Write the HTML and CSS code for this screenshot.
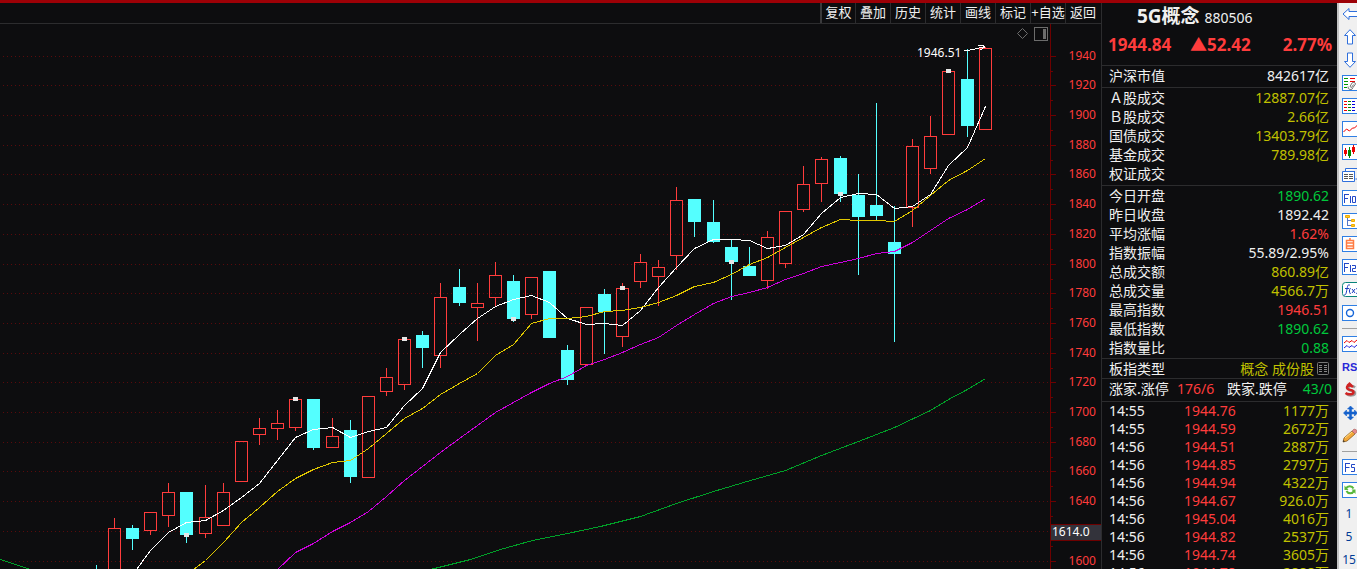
FILE: index.html
```html
<!DOCTYPE html>
<html lang="zh-CN">
<head>
<meta charset="utf-8">
<title>5G概念 880506</title>
<link rel="stylesheet" href="styles.css">
</head>
<body>
<div class="app">
  <main class="main">
    <nav class="toolbar">
      <button class="tool">复权</button><button class="tool">叠加</button><button class="tool">历史</button><button class="tool">统计</button><button class="tool">画线</button><button class="tool">标记</button><button class="tool">+自选</button><button class="tool">返回</button>
    </nav>
    <svg class="chart" id="chart" viewBox="0 24 1101 545" preserveAspectRatio="xMaxYMin slice" role="img" aria-label="K线图"></svg>
  </main>

  <aside class="quote">
    <header class="head">
      <h1 class="title">5G概念 <span class="code">880506</span></h1>
      <div class="prices"><span>1944.84</span><span>▲52.42</span><span>2.77%</span></div>
    </header>
    <dl class="group market">
      <div class="row"><dt>沪深市值</dt><dd>842617亿</dd></div>
    </dl>
    <dl class="group turnover">
      <div class="row"><dt>Ａ股成交</dt><dd class="yellow">12887.07亿</dd></div>
      <div class="row"><dt>Ｂ股成交</dt><dd class="yellow">2.66亿</dd></div>
      <div class="row"><dt>国债成交</dt><dd class="yellow">13403.79亿</dd></div>
      <div class="row"><dt>基金成交</dt><dd class="yellow">789.98亿</dd></div>
      <div class="row"><dt>权证成交</dt><dd></dd></div>
    </dl>
    <dl class="group stats">
      <div class="row"><dt>今日开盘</dt><dd class="green">1890.62</dd></div>
      <div class="row"><dt>昨日收盘</dt><dd>1892.42</dd></div>
      <div class="row"><dt>平均涨幅</dt><dd class="red">1.62%</dd></div>
      <div class="row"><dt>指数振幅</dt><dd>55.89/2.95%</dd></div>
      <div class="row"><dt>总成交额</dt><dd class="yellow">860.89亿</dd></div>
      <div class="row"><dt>总成交量</dt><dd class="yellow">4566.7万</dd></div>
      <div class="row"><dt>最高指数</dt><dd class="red">1946.51</dd></div>
      <div class="row"><dt>最低指数</dt><dd class="green">1890.62</dd></div>
      <div class="row"><dt>指数量比</dt><dd class="green">0.88</dd></div>
    </dl>
    <dl class="group">
      <div class="row"><dt>板指类型</dt><dd class="kind yellow">概念 成份股<svg class="list-icon" width="12" height="13" viewBox="0 0 12 13"><rect x=".5" y=".5" width="11" height="12" rx="1" fill="none" stroke="#777"/><path d="M2 3.5h3M7 3.5h3M2 5.5h3M7 5.5h3M2 7.5h3M7 7.5h3M2 9.5h3M7 9.5h3" stroke="#888"/></svg></dd></div>
    </dl>
    <div class="group breadth">
      <span>涨家.涨停</span><span class="red">176/6</span><span>跌家.跌停</span><span class="green">43/0</span>
    </div>
    <table class="group ticks">
      <tbody>
        <tr><td>14:55</td><td class="red">1944.76</td><td class="yellow">1177万</td></tr>
        <tr><td>14:55</td><td class="red">1944.59</td><td class="yellow">2672万</td></tr>
        <tr><td>14:56</td><td class="red">1944.51</td><td class="yellow">2887万</td></tr>
        <tr><td>14:56</td><td class="red">1944.85</td><td class="yellow">2797万</td></tr>
        <tr><td>14:56</td><td class="red">1944.94</td><td class="yellow">4322万</td></tr>
        <tr><td>14:56</td><td class="red">1944.67</td><td class="yellow">926.0万</td></tr>
        <tr><td>14:56</td><td class="red">1945.04</td><td class="yellow">4016万</td></tr>
        <tr><td>14:56</td><td class="red">1944.82</td><td class="yellow">2537万</td></tr>
        <tr><td>14:56</td><td class="red">1944.74</td><td class="yellow">3605万</td></tr>
        <tr><td>14:56</td><td class="red">1944.78</td><td class="yellow">2888万</td></tr>
      </tbody>
    </table>
  </aside>

  <nav class="side">
    <button class="ico" aria-label="后退"><svg viewBox="0 0 18 16"><path d="M1 8l6-5.5V5.5h8.5v5H7v3z" fill="#fff" stroke="#2f6fdc"/></svg></button>
    <button class="ico" aria-label="上移"><svg viewBox="0 0 18 16"><path d="M8 .7L13.500 6.500H10.500v8.500H5.500V6.500H2.500z" fill="#fff" stroke="#2f6fdc"/></svg></button>
    <button class="ico" aria-label="下移"><svg viewBox="0 0 18 16"><path d="M8 15.300L13.500 9.500H10.500V1H5.500V9.500H2.500z" fill="#fff" stroke="#2f6fdc"/></svg></button>
    <button class="ico" aria-label="报价"><svg class="boxed" viewBox="0 0 18 16"><path d="M2 3.500h4M2 6.500h4M2 9.500h4M2 12.500h3" stroke="#090"/><path d="M8 3.500h5M8 6.500h5" stroke="#e00"/><path d="M6 11.500a2.500 2.500 0 0 0 5 1l2.500-3.500a2 2 0 0 0-3.500-1l-2 3.500 1.500 1 2-3" fill="none" stroke="#777"/></svg></button>
    <button class="ico" aria-label="列表"><svg class="boxed" viewBox="0 0 18 16"><path d="M2 3.500h3M2 6.500h3M2 9.500h3M2 12.500h3" stroke="#e00"/><path d="M6 3.500h3M6 6.500h3M6 9.500h3M6 12.500h3" stroke="#080"/><path d="M10 3.500h3M10 6.500h3M10 9.500h3M10 12.500h3" stroke="#00d"/></svg></button>
    <button class="ico" aria-label="分时"><svg class="boxed" viewBox="0 0 18 16"><path d="M1.500 11l3-3 3 2 3-3h2l3-3" fill="none" stroke="#e00"/></svg></button>
    <button class="ico" aria-label="K线"><svg class="boxed" viewBox="0 0 18 16"><path d="M2 6h3v4H2zM3 4h1v8H3zM10 3h3v5h-3zM11 1h1v9h-1z" fill="#e00"/><path d="M6 6h3v6H6zM7 3h1v11H7z" fill="#080"/></svg></button>
    <button class="ico" aria-label="多窗口"><svg viewBox="0 0 18 16"><path d="M3.500 4v-2.500H18M.5 4.500h12v10H.5z" fill="#fff" stroke="#2f6fdc"/><path d="M1 4.500h12M13.500 12H18" stroke="#2f6fdc"/><path d="M2 7.500h4M7 7.500h4M2 9.500h4M7 9.500h4M2 11.500h4M7 11.500h4" stroke="#555"/></svg></button>
    <button class="ico" aria-label="F10"><svg class="boxed" viewBox="0 0 18 16"><path d="M2.500 13V4M2.500 4.500H7M2.500 8.500H6M8.500 6v7M10.500 6.500h3v6h-3z" fill="none" stroke="#2348c8"/></svg></button>
    <button class="ico" aria-label="板块"><svg class="boxed" viewBox="0 0 18 16"><path d="M5.500 4v9M5.500 7.500H10M5.500 12.500H10" fill="none" stroke="#5578c8"/><path d="M3.500 2.500h4v2h-4zM9.500 6.500h3v2h-3zM9.500 11.500h3v2h-3z" fill="#ffc928" stroke="#f0ac00"/></svg></button>
    <button class="ico" aria-label="自选"><svg class="boxed" viewBox="0 0 18 16"><path d="M8 2v2M4.500 4.500h7v8h-7zM5 7h6M5 10h6" fill="none" stroke="#ff7b42" stroke-width="1.500"/></svg></button>
    <button class="ico" aria-label="F12"><svg class="boxed" viewBox="0 0 18 16"><path d="M2.500 13V4M2.500 4.500H7M2.500 8.500H6M8.500 6v7M10 6.500h3.500v3h-3v3H14" fill="none" stroke="#2348c8"/></svg></button>
    <button class="ico" aria-label="公式"><svg viewBox="0 0 18 16"><rect x=".5" y=".5" width="18" height="14" rx="3" fill="#fff" stroke="#08847a"/><path d="M2 13c2 0 2-1 3-6s1-4 3-4M3 6.500h4M8.500 6c-1.500 2-1.500 4 0 6M10 7l3 4M13 7l-3 4M14.500 6c1.500 2 1.500 4 0 6" fill="none" stroke="#1c3cc0"/></svg></button>
    <button class="ico" aria-label="圆"><svg class="boxed" viewBox="0 0 18 16"><circle cx="8" cy="8" r="3.500" fill="none" stroke="#1565d8" stroke-width="1.400"/></svg></button>
    <hr class="rule">
    <button class="ico" aria-label="指标"><svg class="boxed" viewBox="0 0 18 16"><path d="M2 7l3-2.500 2 2 3-2 2 2 3-2.500" fill="none" stroke="#e00"/><path d="M2 12l3-2.500 2 2 3-2 2 2 3-2.500" fill="none" stroke="#22d"/></svg></button>
    <button class="ico rsi">RSI</button>
    <button class="ico" aria-label="交易"><svg viewBox="0 0 18 16"><path d="M13 5.500c-2-2-7-2-7 1s7 1.500 7 4.500-6 3-8 1" fill="none" stroke="#999" stroke-width="2.500"/><path d="M11 5c-2-2-6-2-6 .8s6.500 1.400 6.500 4.200-5.500 3-8 1" fill="none" stroke="#cf2222" stroke-width="2.500"/><path d="M4.500 3L7.500 0l3 3z" fill="#cf2222"/></svg></button>
    <button class="ico" aria-label="移动"><svg viewBox="0 0 18 16"><path d="M8.500 1l3 3h-2v3h3V5l3 3-3 3V9h-3v3h2l-3 3-3-3h2V9h-3v2l-3-3 3-3v2h3V4h-2z" fill="#1461cc" stroke="#1461cc" stroke-width=".6"/></svg></button>
    <button class="ico" aria-label="画笔"><svg viewBox="0 0 18 16"><path d="M1 14l1-4 8-7 3 3-8 7z" fill="#f2a83a" stroke="#8a5a1c" stroke-width=".8"/><path d="M10 3l2-2q3 0 3 3l-2 2z" fill="#e58a8a" stroke="#a66" stroke-width=".6"/><path d="M3 10l7-6" stroke="#ffe08a"/><path d="M1 14l.5-2 1.500 1.500z" fill="#333"/></svg></button>
    <hr class="rule">
    <button class="ico" aria-label="F5"><svg class="boxed" viewBox="0 0 18 16"><path d="M3.500 13V4M3.500 4.500H8M3.500 8.500H7.500M13 5.500H9.500v3h3v4H9" fill="none" stroke="#2348c8"/></svg></button>
    <button class="ico" aria-label="刷新"><svg class="boxed" viewBox="0 0 18 16"><path d="M4 6.500c1.500-3 6-3 7.500 0M12 9c-1.500 3-6 3-7.500 0" fill="none" stroke="#58b83c" stroke-width="2"/><path d="M2.500 3.500v4.500h4zM13.500 12V7.500h-4z" fill="#58b83c"/></svg></button>
    <button class="ico num">1</button>
    <button class="ico num">5</button>
    <button class="ico num">15</button>
  </nav>
</div>
<script src="chart.js"></script>
</body>
</html>
```

FILE: styles.css
```css
* { box-sizing: border-box; }

body {
  margin: 0;
  background: #0d0d0f;
  color: #f0f0f0;
  font: 14px/19px "Noto Sans", "Noto Sans CJK SC", sans-serif;
  overflow: hidden;
}

button {
  margin: 0;
  padding: 0;
  border: 0;
  background: none;
  color: inherit;
  font: inherit;
  cursor: pointer;
}

.app {
  display: flex;
  height: 100vh;
  border-top: 3px solid #9c0006;
}

.main {
  flex: 1;
  min-width: 0;
  display: flex;
  flex-direction: column;
}

.toolbar {
  display: flex;
  justify-content: flex-end;
  height: 21px;
  flex: none;
  padding-right: 1px;
  border-bottom: 1px solid #2c2c2e;
}

.tool {
  width: 35px;
  padding-bottom: 2px;
  border-left: 1px solid #2c2c2e;
  font-size: 13px;
  line-height: 18px;
  white-space: nowrap;
}

.tool:first-child { border-left: 2px solid #3a3a3c; }

.chart {
  display: block;
  flex: 1;
  width: 100%;
  min-height: 0;
  font-size: 12px;
}

.grid { stroke: #5a0a0c; stroke-dasharray: 1 3; }
.axis { stroke: #6e0000; }
.axis-label { fill: #ff3c3c; text-anchor: end; }
.up { fill: none; stroke: #ff3c3c; }
.down { fill: #54ffff; stroke: #54ffff; }
.mark { fill: #e6e6e6; }
.line { fill: none; shape-rendering: crispEdges; }
.ma-white { stroke: #fff; }
.ma-yellow { stroke: #e0c800; }
.ma-magenta { stroke: #cc00dc; }
.ma-green { stroke: #00a028; }
.note { fill: #fff; }
.tool-shape { fill: none; stroke: #6c6c6c; }
.tool-fill { fill: #6c6c6c; }
.cursor-box { fill: #33333b; }
.cursor-edge { stroke: #6e0000; }

.quote {
  width: 236px;
  flex: none;
  border-left: 1px solid #2c2c2e;
  overflow: hidden;
}

.head { height: 62px; }

.title {
  margin: 0;
  padding-left: 35px;
  font-size: 19px;
  font-weight: 700;
  line-height: 26px;
}

.code { font-size: 14px; font-weight: 400; }

.prices {
  display: grid;
  grid-template-columns: 82px 1fr auto;
  padding: 0 5px 0 6px;
  color: #ff3c3c;
  font-size: 17px;
  font-weight: 700;
  line-height: 28px;
}

.group {
  margin: 0;
  padding: 0 8px 0 7px;
  border-top: 1px solid #2c2c2e;
}

.market { padding-bottom: 2px; }
.turnover { padding-bottom: 2px; }
.stats { padding-bottom: 1px; }

.row { display: flex; justify-content: space-between; }
.row dd { margin: 0; }
.kind { display: flex; align-items: center; gap: 3px; }

.yellow { color: #c0c000; }
.green { color: #00c83c; }
.red { color: #ff3c3c; }

.breadth {
  display: grid;
  grid-template-columns: 68px 50px 1fr auto;
  height: 23px;
  padding-right: 5px;
  line-height: 20px;
}

.ticks {
  display: block;
  border-collapse: collapse;
  line-height: 18px;
}

.ticks tbody { display: block; }
.ticks tr { display: grid; grid-template-columns: 75px 1fr 1fr; }
.ticks td { padding: 0; }
.ticks td:last-child { text-align: right; }

.side {
  display: flex;
  flex-direction: column;
  align-items: flex-start;
  width: 20px;
  flex: none;
  padding-left: 3px;
  border-left: 2px solid #c4c4c4;
  background: #f0f0f0;
  overflow: hidden;
}

.ico {
  flex: none;
  display: flex;
  align-items: center;
  height: 23px;
}

.ico svg { display: block; width: 18px; height: 16px; margin-bottom: 1px; }
.ico .boxed { outline: 1px solid #2f7fe4; outline-offset: -1px; background: #fff; }

.rule {
  width: 100%;
  flex: none;
  margin: 3px 0 4px;
  border: 0;
  border-top: 1px solid #a0a0a0;
}

.rsi {
  color: #2828d8;
  font: 700 11px/23px "Liberation Sans", sans-serif;
}

.num {
  width: 14px;
  justify-content: center;
  color: #003c96;
  font-size: 12px;
}
```

FILE: chart.js
```js
const NS = "http://www.w3.org/2000/svg";
const chart = document.getElementById("chart");

function add(tag, attrs, text) {
  const el = document.createElementNS(NS, tag);
  for (const key in attrs) el.setAttribute(key, attrs[key]);
  if (text) el.textContent = text;
  chart.appendChild(el);
}

// Price grid and axis
for (let i = 0; i < 18; i++) {
  const y = Math.round(55.6 + i * 29.7) + 0.5;
  const price = 1940 - i * 20;
  add("path", { class: "grid", d: `M3 ${y}H1050` });
  add("path", { class: "axis", d: `M1050 ${y}h6M1050 ${y + 15}h3` });
  if (price !== 1620) add("text", { class: "axis-label", x: 1096, y: y + 3.5 }, String(price));
}
add("path", { class: "axis", d: "M1050.5 24V600" });

// Candles: x, body top, body bottom, high, low, falling
const candles = [
  [96, 569, 580, 565, 580, 1], [114, 528, 580, 518, 580, 0], [132, 528, 539, 525, 550, 1],
  [150, 512, 531, 512, 535, 0], [168, 492, 516, 483, 527, 0], [186, 492, 535, 492, 543, 1],
  [205, 517, 534, 485, 538, 0], [223, 492, 526, 483, 526, 0], [241, 441, 482, 441, 482, 0],
  [259, 428, 435, 418, 445, 0], [277, 423, 429, 410, 440, 0], [295, 399, 428, 399, 431, 0],
  [313, 399, 448, 399, 450, 1], [332, 436, 448, 418, 448, 0], [350, 430, 477, 420, 483, 1],
  [368, 396, 478, 396, 478, 0], [386, 377, 392, 368, 396, 0], [404, 339, 385, 339, 390, 0],
  [422, 335, 348, 331, 368, 1], [440, 297, 356, 283, 368, 0], [459, 287, 303, 269, 306, 1],
  [477, 303, 308, 283, 341, 0], [495, 275, 298, 262, 306, 0], [513, 281, 319, 275, 322, 1],
  [531, 277, 315, 277, 319, 0], [549, 271, 338, 271, 338, 1], [567, 350, 380, 345, 385, 1],
  [586, 307, 365, 307, 365, 0], [604, 294, 312, 289, 354, 1], [622, 288, 337, 283, 347, 0],
  [640, 262, 282, 254, 288, 0], [658, 267, 277, 260, 306, 0], [676, 200, 256, 187, 270, 0],
  [694, 199, 222, 199, 237, 1], [713, 222, 242, 200, 243, 1], [731, 247, 262, 240, 300, 1],
  [749, 266, 276, 247, 276, 1], [767, 237, 281, 231, 289, 0], [785, 211, 264, 211, 268, 0],
  [803, 184, 210, 166, 212, 0], [821, 159, 184, 157, 202, 0], [840, 158, 194, 156, 202, 1],
  [858, 195, 217, 174, 275, 1], [876, 205, 216, 103, 220, 1], [894, 242, 254, 206, 342, 1],
  [912, 146, 208, 139, 227, 0], [930, 136, 169, 116, 174, 0], [948, 71, 135, 71, 135, 0],
  [967, 79, 126, 49, 137, 1], [985, 48, 130, 47, 130, 0]
];
for (const [x, top, bottom, high, low, down] of candles) {
  const cls = down ? "down" : "up";
  const c = x + 0.5;
  add("rect", { class: cls, x: x - 5.5, y: top + 0.5, width: 12, height: bottom - top - 1 });
  add("path", { class: cls, d: `M${c} ${high}V${top}M${c} ${bottom}V${low}` });
}

// Moving averages
const lines = {
  "ma-white": "136,569 150,550 168,532 186,522 205,520 223,510 241,497 259,483 277,460 295,437 313,429 332,427 350,437 368,431 386,427 404,405 422,388 440,352 459,334 477,318 495,306 513,299 531,295 549,302 567,318 586,324 604,323 622,325 640,310 658,287 676,267 694,248 713,239 731,239 749,240 767,248 785,245 803,234 821,213 840,197 858,193 876,194 894,208 912,206 930,194 948,165 967,147 985,106",
  "ma-yellow": "193,569 205,560 223,542 241,522 259,507 277,491 295,478 313,469 332,462 350,460 368,448 386,433 404,418 422,408 440,394 459,383 477,373 495,355 513,344 531,323 549,318 567,318 586,316 604,311 622,310 640,307 658,302 676,295 694,286 713,282 731,274 749,264 767,257 785,247 803,237 821,227 840,219 858,220 876,220 894,221 912,210 930,195 948,180 967,170 985,158",
  "ma-magenta": "277,569 295,552 313,543 332,531 350,522 368,511 386,496 404,480 422,466 440,452 459,438 477,425 495,412 513,402 531,392 549,383 567,376 586,365 604,359 622,352 640,344 658,337 676,325 694,314 713,303 731,296 749,292 767,287 785,279 803,273 821,266 840,262 858,258 876,253 894,251 912,242 930,230 948,218 967,209 985,198",
  "ma-green": "0,559 30,569 50,576 410,576 430,569 470,559 500,549 532,540 567,533 600,526 640,516 676,503 713,491 750,480 785,470 821,455 858,441 894,427 930,410 948,399 967,389 985,378"
};
for (const name in lines) {
  add("polyline", { class: `line ${name}`, points: lines[name], transform: "translate(.5 .5)" });
}

// Event markers
for (const [x, y] of [[186, 535], [295, 399], [404, 339], [513, 319], [622, 288], [731, 262], [840, 194], [948, 71]]) {
  add("rect", { class: "mark", x: x - 2, y: y - 2, width: 5, height: 4 });
}

// High annotation
add("text", { class: "note", x: 917, y: 57 }, "1946.51");
add("path", { class: "line ma-white", d: "M964 50.500h4L984 47M978 45.500h5l1.500 1.500-4 3" });

// Pane controls
add("path", { class: "tool-shape", d: "M1022.500 28.500l5 5-5 5-5-5z" });
add("rect", { class: "tool-shape", x: 1034.5, y: 27.5, width: 13, height: 13 });
add("rect", { class: "tool-fill", x: 1043, y: 29, width: 3, height: 10 });

// Cursor price
add("rect", { class: "cursor-box", x: 1051, y: 525, width: 50, height: 15 });
add("path", { class: "cursor-edge", d: "M1051 524.500h50M1051 540.500h50" });
add("text", { class: "note", x: 1052, y: 536 }, "1614.0");
```
